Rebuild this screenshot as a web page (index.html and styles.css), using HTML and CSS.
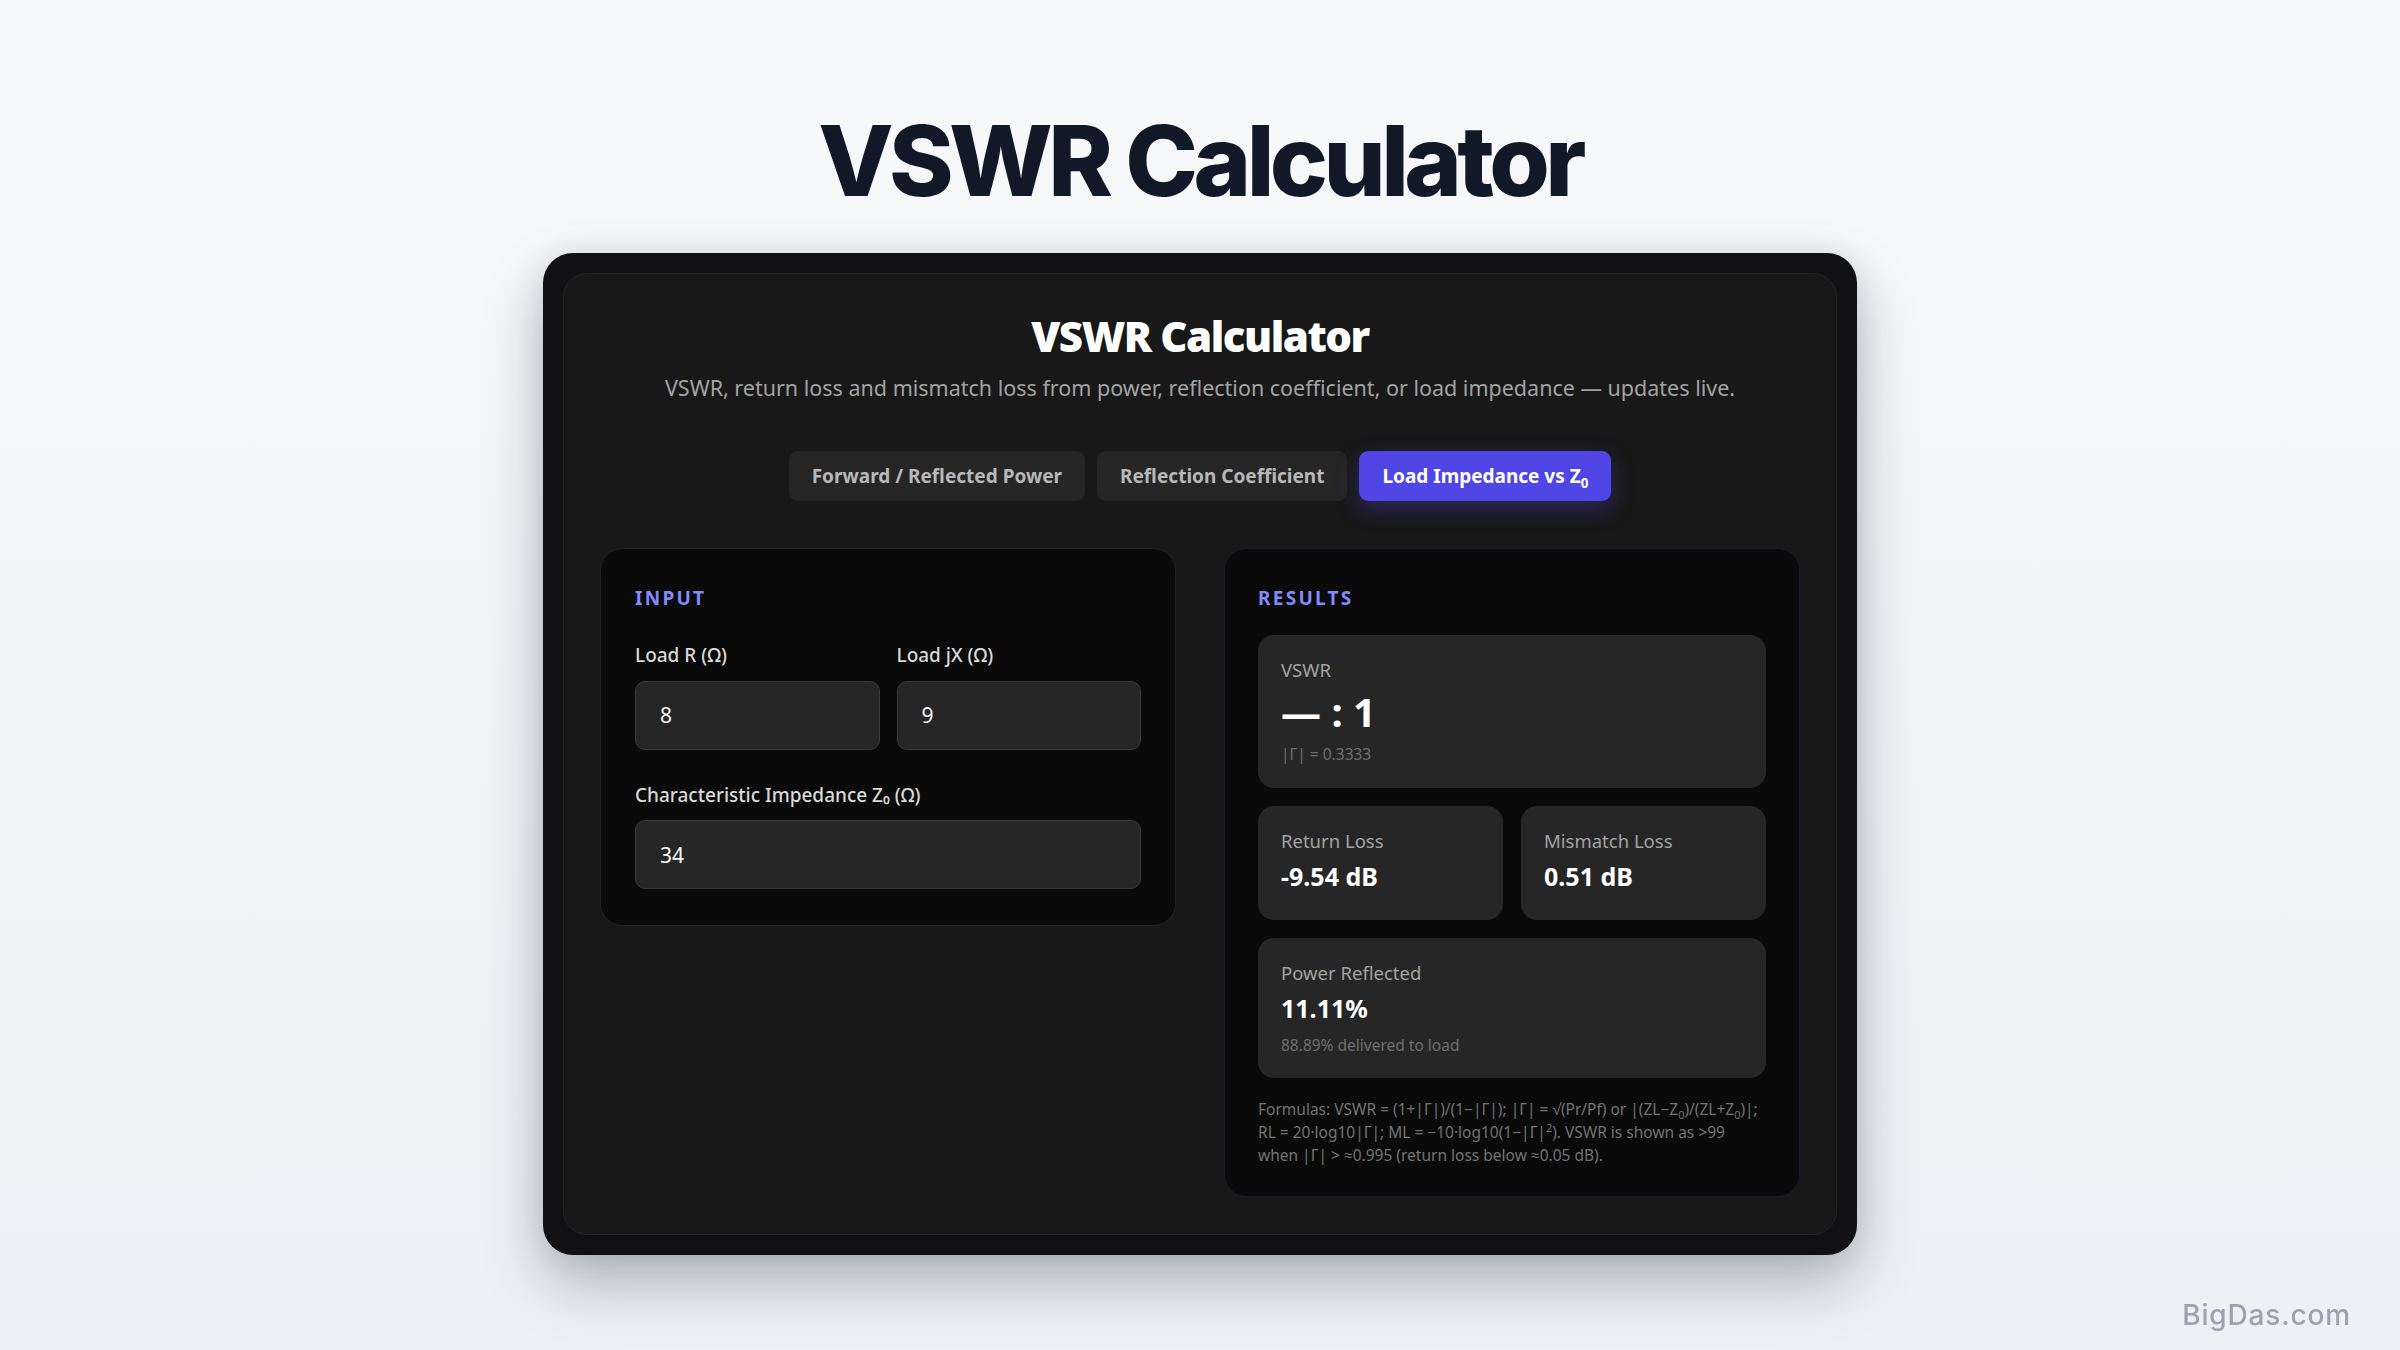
FILE: index.html
```html
<!DOCTYPE html>
<html lang="en">
<head>
<meta charset="utf-8">
<title>VSWR Calculator</title>
<link rel="stylesheet" href="styles.css">
</head>
<body>
<main class="page">
  <h1 class="page-title">VSWR Calculator</h1>
  <div class="device">
    <section class="app">
      <header class="app-header">
        <h2 class="app-title">VSWR Calculator</h2>
        <p class="app-subtitle">VSWR, return loss and mismatch loss from power, reflection coefficient, or load impedance — updates live.</p>
      </header>
      <nav class="tabs">
        <button class="tab" type="button">Forward / Reflected Power</button>
        <button class="tab" type="button">Reflection Coefficient</button>
        <button class="tab tab-active" type="button">Load Impedance vs Z<sub>0</sub></button>
      </nav>
      <div class="panels">
        <section class="panel panel-input">
          <h3 class="panel-label">INPUT</h3>
          <div class="field-row">
            <label class="field">
              <span class="field-label">Load R (Ω)</span>
              <input class="field-input" type="text" value="8">
            </label>
            <label class="field">
              <span class="field-label">Load jX (Ω)</span>
              <input class="field-input" type="text" value="9">
            </label>
          </div>
          <label class="field">
            <span class="field-label">Characteristic Impedance Z₀ (Ω)</span>
            <input class="field-input" type="text" value="34">
          </label>
        </section>
        <section class="panel panel-results">
          <h3 class="panel-label">RESULTS</h3>
          <div class="result-card result-main">
            <div class="result-label">VSWR</div>
            <div class="result-value result-value-big">— : 1</div>
            <div class="result-sub">|Γ| = 0.3333</div>
          </div>
          <div class="result-pair">
            <div class="result-card result-small">
              <div class="result-label">Return Loss</div>
              <div class="result-value">-9.54 dB</div>
            </div>
            <div class="result-card result-small">
              <div class="result-label">Mismatch Loss</div>
              <div class="result-value">0.51 dB</div>
            </div>
          </div>
          <div class="result-card result-power">
            <div class="result-label">Power Reflected</div>
            <div class="result-value">11.11%</div>
            <div class="result-sub">88.89% delivered to load</div>
          </div>
          <p class="formulas">Formulas: VSWR = (1+|Γ|)/(1−|Γ|); |Γ| = √(Pr/Pf) or |(ZL−Z<sub>0</sub>)/(ZL+Z<sub>0</sub>)|;<br>RL = 20·log10|Γ|; ML = −10·log10(1−|Γ|<sup>2</sup>). VSWR is shown as &gt;99<br>when |Γ| &gt; ≈0.995 (return loss below ≈0.05 dB).</p>
        </section>
      </div>
    </section>
  </div>
</main>
<div class="watermark">BigDas.com</div>
</body>
</html>
```
FILE: styles.css
```css
* {
  box-sizing: border-box;
}

html, body {
  margin: 0;
  padding: 0;
}

body {
  min-height: 1350px;
  background: linear-gradient(180deg, #f8f9fb 0%, #f1f3f6 60%, #edf0f4 100%);
  font-family: "Noto Sans", "Open Sans", "DejaVu Sans", sans-serif;
  color: #f5f5f5;
}

.page {
  display: flex;
  flex-direction: column;
  align-items: center;
  padding-top: 112px;
}

.page-title {
  margin: 0;
  font-family: Inter, "Liberation Sans", sans-serif;
  font-weight: 800;
  font-size: 98px;
  line-height: 1;
  letter-spacing: -0.047em;
  color: #111827;
}

.device {
  margin-top: 43px;
  width: 1314px;
  padding: 20px;
  background: #111113;
  border-radius: 30px;
  box-shadow: 0 28px 60px rgba(15, 23, 42, 0.28), 0 0 30px rgba(15, 23, 42, 0.08);
}

.app {
  background: #181818;
  border: 1px solid #252525;
  border-radius: 24px;
  padding: 37px 36px 37px;
}

.app-header {
  text-align: center;
}

.app-title {
  margin: 0;
  font-size: 42px;
  font-weight: 900;
  line-height: 1.2;
  letter-spacing: -0.035em;
  color: #ffffff;
}

.app-subtitle {
  margin: 11px 0 0;
  font-size: 21.5px;
  line-height: 1.5;
  color: #a3a3a3;
}

.tabs {
  display: flex;
  justify-content: center;
  gap: 12px;
  margin-top: 46px;
}

.tab {
  height: 50px;
  padding: 0 23px;
  border: none;
  border-radius: 9px;
  background: #262626;
  color: #b8b8b8;
  font-family: inherit;
  font-size: 19px;
  font-weight: 700;
}

.tab sub {
  font-size: 0.7em;
  line-height: 0;
}

.tab-active {
  background: #4f46e5;
  color: #ffffff;
  box-shadow: 0 8px 22px rgba(79, 70, 229, 0.35);
}

.panels {
  display: grid;
  grid-template-columns: 1fr 1fr;
  gap: 48px;
  margin-top: 47px;
  align-items: start;
}

.panel {
  background: #0a0a0a;
  border: 1px solid #242424;
  border-radius: 22px;
  padding: 36px 34px 36px;
}

.panel-results {
  border-color: #1b1a2c;
  padding-left: 33px;
  padding-right: 33px;
  padding-bottom: 29px;
}

.panel-label {
  margin: 0 0 31px;
  font-size: 19px;
  font-weight: 700;
  line-height: 1.4;
  letter-spacing: 0.12em;
  color: #818cf8;
}

.panel-results .panel-label {
  margin-bottom: 24px;
}

.field-row {
  display: grid;
  grid-template-columns: 1fr 1fr;
  gap: 17px;
  margin-bottom: 32px;
}

.field {
  display: flex;
  flex-direction: column;
}

.field-label {
  font-size: 19px;
  font-weight: 500;
  line-height: 1.4;
  color: #d9d9d9;
  margin-bottom: 12px;
}

.field-input {
  width: 100%;
  height: 69px;
  padding: 0 24px;
  background: #262626;
  border: 1px solid #3a3a3a;
  border-radius: 10px;
  color: #f5f5f5;
  font-family: inherit;
  font-size: 21px;
  outline: none;
}

.result-card {
  background: #262626;
  border-radius: 16px;
  padding: 22px 23px 22px;
}

.result-pair {
  display: grid;
  grid-template-columns: 1fr 1fr;
  gap: 18px;
  margin-top: 18px;
}

.result-small {
  padding-bottom: 26px;
}

.result-power {
  margin-top: 18px;
  padding-bottom: 22px;
}

.result-label {
  font-size: 18.5px;
  line-height: 1.4;
  color: #a3a3a3;
}

.result-value {
  margin-top: 5px;
  font-size: 25px;
  font-weight: 700;
  line-height: 1.4;
  color: #ffffff;
}

.result-value-big {
  margin-top: 5px;
  font-size: 40px;
  line-height: 1.2;
}

.result-sub {
  margin-top: 8px;
  font-size: 15.5px;
  line-height: 1.4;
  color: #6e6e6e;
}

.result-power .result-sub {
  margin-top: 9px;
}

.formulas {
  margin: 20px 0 0;
  font-size: 15.5px;
  line-height: 23px;
  color: #737373;
  white-space: nowrap;
}

.formulas sub,
.formulas sup {
  font-size: 0.7em;
  line-height: 0;
}

.watermark {
  position: fixed;
  right: 49px;
  bottom: 18px;
  font-family: Inter, "Liberation Sans", sans-serif;
  font-size: 28px;
  font-weight: 500;
  letter-spacing: 0.03em;
  color: #9ca3af;
}
```
